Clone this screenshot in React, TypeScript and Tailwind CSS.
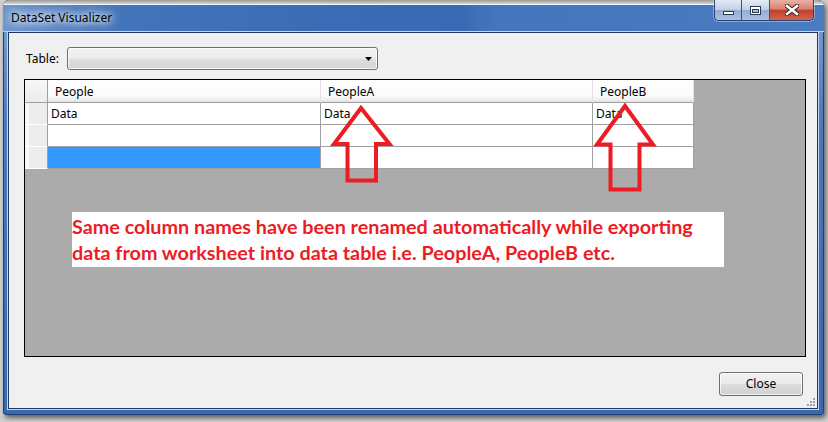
const ui = { fontFamily: '"Noto Sans", "Liberation Sans", sans-serif' }

function CaptionButtons() {
  return (
    <div className="absolute top-0 right-[10px] flex h-[21px] overflow-hidden rounded-b-[5px] border border-t-0 border-[#2e4468] shadow-[0_0_0_1px_rgba(255,255,255,0.35)]">
      <div className="flex w-[27px] items-end justify-center border-r border-[#3f5475] bg-[linear-gradient(180deg,#e3ebf6_0%,#bfd0e7_48%,#94add2_52%,#a9c1e2_100%)] pb-[5px]">
        <div className="h-[4px] w-[11px] border border-[#2d3b52] bg-white" />
      </div>
      <div className="flex w-[28px] items-center justify-center border-r border-[#3f5475] bg-[linear-gradient(180deg,#e3ebf6_0%,#bfd0e7_48%,#94add2_52%,#a9c1e2_100%)]">
        <div className="h-[9px] w-[11px] border border-[#2d3b52] bg-white p-[1px] pt-[2px]">
          <div className="h-full w-full border border-[#2d3b52] bg-[#a9bfdd]" />
        </div>
      </div>
      <div className="flex w-[43px] items-center justify-center bg-[linear-gradient(180deg,#eab0a3_0%,#d7826f_45%,#c2402d_52%,#d2644f_100%)]">
        <svg width="14" height="12" viewBox="0 0 14 12">
          <path d="M2 2 L12 10 M12 2 L2 10" stroke="#3b2020" strokeWidth="4.5" strokeLinecap="square" />
          <path d="M2 2 L12 10 M12 2 L2 10" stroke="#ffffff" strokeWidth="2.5" strokeLinecap="square" />
        </svg>
      </div>
    </div>
  )
}

function Button({ children, className }: { children: string; className?: string }) {
  return (
    <div
      className={
        'flex items-center justify-center rounded-[3px] border border-[#707070] bg-[linear-gradient(180deg,#f2f2f2_0%,#ebebeb_48%,#dddddd_52%,#cfcfcf_100%)] text-[12px] text-black shadow-[inset_0_0_0_1px_rgba(255,255,255,0.7)] ' +
        (className ?? '')
      }
    >
      {children}
    </div>
  )
}

const cols = [
  { name: 'People', w: 'w-[273px]' },
  { name: 'PeopleA', w: 'w-[272px]' },
  { name: 'PeopleB', w: 'w-[101px]' },
]

function Grid() {
  return (
    <div className="relative mt-[9px] h-[278px] w-[782px] border border-black bg-[#ababab]">
      {/* header */}
      <div className="flex h-[23px]">
        <div className="w-[23px] border-r border-b border-[#a0a0a0] bg-[linear-gradient(180deg,#f7f7f7,#ececec)]" />
        {cols.map((c) => (
          <div
            key={c.name}
            className={`${c.w} flex items-center border-r border-b border-r-[#e2e2e2] border-b-[#a0a0a0] bg-[linear-gradient(180deg,#ffffff_0%,#fbfbfb_70%,#eef0f2_88%,#dfe3e8_100%)] pt-[1px] pl-[7px] text-[12px] text-black`}
          >
            {c.name}
          </div>
        ))}
      </div>
      {[0, 1, 2].map((r) => (
        <div key={r} className="flex h-[22px]">
          <div className="w-[23px] border-r border-b border-r-[#a0a0a0] border-b-white bg-[#ededed] shadow-[inset_4px_0_0_#f7f7f7]" />
          {cols.map((c, i) => (
            <div
              key={c.name}
              className={`${c.w} flex items-center border-r border-b border-[#a0a0a0] pl-[3px] text-[12px] text-black ${
                r === 2 && i === 0 ? 'bg-[#3399ff]' : 'bg-white'
              }`}
            >
              {r === 0 ? 'Data' : ''}
            </div>
          ))}
        </div>
      ))}

      {/* annotation */}
      <div
        className="absolute left-[47px] top-[132px] h-[55px] w-[652px] bg-white pt-[1px] text-[19.8px] font-bold leading-[26px] text-[#ed1c24]"
        style={{ fontFamily: 'Lato, "Liberation Sans", sans-serif' }}
      >
        <div className="whitespace-nowrap">Same column names have been renamed automatically while exporting</div>
        <div className="whitespace-nowrap">data from worksheet into data table i.e. PeopleA, PeopleB etc.</div>
      </div>

      <svg className="pointer-events-none absolute inset-0" width="780" height="276">
        <polygon
          points="336,28 309,64 322.5,64 322.5,100.5 351,100.5 351,64 364.5,64"
          fill="none"
          stroke="#ed1c24"
          strokeWidth="4"
        />
        <polygon
          points="600,26 572,64.5 585.5,64.5 585.5,109.5 614.5,109.5 614.5,64.5 628,64.5"
          fill="none"
          stroke="#ed1c24"
          strokeWidth="4"
        />
      </svg>
    </div>
  )
}

export default function App() {
  return (
    <div className="h-[422px] w-[828px] overflow-hidden bg-[#cfcfcf] pl-[3px]" style={ui}>
      <div className="flex h-[415px] w-[821px] flex-col rounded-t-[6px] rounded-b-[4px] bg-[linear-gradient(180deg,#7ea3d6_0%,#4a79bf_30%,#3e6db6_70%,#3968b2_100%)] pr-[6px] pb-[6px] pl-[5px] shadow-[inset_0_0_0_1px_#243f66,2px_3px_5px_rgba(0,0,0,0.55)]">
        {/* title bar */}
        <div className="relative -mr-[6px] -ml-[5px] flex h-[32px] flex-col overflow-hidden rounded-t-[6px]">
          <div className="h-[4px] bg-[linear-gradient(180deg,#9a9a9a,#d6d6d6)]" />
          <div className="h-px bg-[#f4f7fb]" />
          <div className="flex flex-1 items-center bg-[linear-gradient(90deg,#6d96cd_0%,#4474ba_14%,#3b6bb4_40%,#3a6ab3_56%,#4576bd_60%,#4a7bc0_100%)] pl-[8px] pb-[1px]">
            <span className="text-[12px] text-black [text-shadow:0_0_6px_#fff,0_0_10px_#fff,0_0_14px_rgba(255,255,255,0.8)]">
              DataSet Visualizer
            </span>
          </div>
          <div className="h-px bg-[#b9cde9]" />
          <CaptionButtons />
        </div>

        {/* client */}
        <div className="relative flex flex-1 flex-col border border-[#1f3a60] bg-[#f0f0f0] pt-[14px] pl-[15px] shadow-[0_0_0_1px_#c3d5ee]">
          <div className="flex h-[23px] items-center">
            <span className="ml-[2px] w-[41px] text-[12px] text-black">Table:</span>
            <div className="flex h-[23px] w-[311px] items-center justify-end rounded-[3px] border border-[#707070] bg-[linear-gradient(180deg,#f3f3f3_0%,#ececec_48%,#dfdfdf_52%,#d2d2d2_100%)] pr-[5px] shadow-[inset_0_0_0_1px_rgba(255,255,255,0.75)]">
              <svg width="7" height="4" viewBox="0 0 7 4">
                <path d="M0 0 H7 L3.5 4 Z" fill="#000" />
              </svg>
            </div>
          </div>

          <Grid />

          <div className="mt-[15px] flex justify-end pr-[14px]">
            <Button className="h-[24px] w-[84px]">Close</Button>
          </div>

          <svg className="absolute right-[1px] bottom-[1px]" width="10" height="10" viewBox="0 0 10 10">
            <g fill="#9aa0a8">
              <rect x="7" y="1" width="2" height="2" />
              <rect x="4" y="4" width="2" height="2" />
              <rect x="7" y="4" width="2" height="2" />
              <rect x="1" y="7" width="2" height="2" />
              <rect x="4" y="7" width="2" height="2" />
              <rect x="7" y="7" width="2" height="2" />
            </g>
          </svg>
        </div>
      </div>
    </div>
  )
}
